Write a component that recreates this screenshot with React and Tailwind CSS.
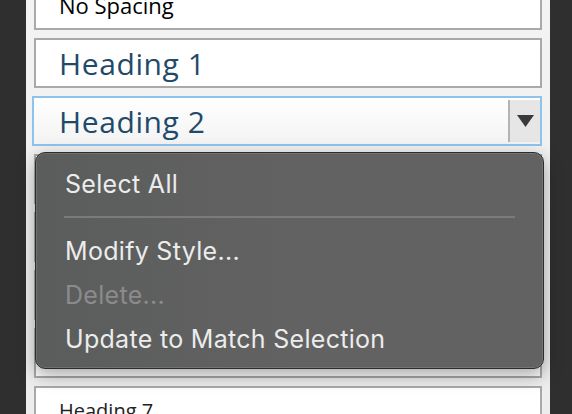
import React from "react";

// the boxes under the menu are covered; their labels are not drawn
const boxes = [
  { id: "nospacing", label: "No Spacing", kind: "plain" },
  { id: "h1", label: "Heading 1", kind: "heading" },
  { id: "h2", label: "Heading 2", kind: "active" },
  { id: "h3", label: "", kind: "heading" },
  { id: "h4", label: "", kind: "heading" },
  { id: "h5", label: "", kind: "heading" },
  { id: "h6", label: "", kind: "heading" },
  { id: "h7", label: "Heading 7", kind: "small" },
];

function StyleBox({ label, kind }) {
  if (kind === "active") {
    return (
      <div className="-ml-[2px] flex h-[50px] w-[510px] shrink-0 border-2 border-[#8fc3ea] bg-gradient-to-b from-white to-[#f3f3f3]">
        <div className="flex flex-1 items-center pl-[25px] text-[30px] tracking-[0.6px] text-[#1f4a69] [font-family:'Open_Sans',sans-serif]">
          {label}
        </div>
        <div className="my-[2px] flex w-[32px] items-center justify-center border-l-2 border-[#b4b4b4] bg-[#e6e6e6]">
          <svg width="17" height="14" viewBox="0 0 17 14">
            <path d="M0 1 L17 1 L8.5 13 Z" fill="#3a3a3a" />
          </svg>
        </div>
      </div>
    );
  }
  const text =
    kind === "plain"
      ? "text-[22px] text-black"
      : kind === "small"
      ? "text-[20px] text-[#222]"
      : "text-[30px] tracking-[0.6px] text-[#1f4a69]";
  return (
    <div
      className={`flex h-[50px] w-[508px] shrink-0 items-center border-2 border-[#a9a9a9] bg-white pl-[23px] [font-family:'Open_Sans',sans-serif] ${text}`}
    >
      {label}
    </div>
  );
}

function MenuItem({ children, disabled }) {
  return (
    <div
      className={`flex h-[44px] items-center pl-[29px] text-[25px] tracking-[0.3px] ${
        disabled ? "text-[#8b8b8b]" : "text-[#ececec]"
      }`}
    >
      {children}
    </div>
  );
}

export default function App() {
  return (
    <div className="flex h-[414px] w-[572px] overflow-hidden bg-[#2f2f2f]">
      <div className="relative ml-[26px] h-full w-[524px] bg-gradient-to-b from-[#f3f3f3] to-[#ededed]">
        <div className="-mt-[20px] flex flex-col gap-[8px] pl-[8px]">
          {boxes.map((b) => (
            <StyleBox key={b.id} label={b.label} kind={b.kind} />
          ))}
        </div>

        <div className="absolute left-[9px] top-[152px] h-[217px] w-[509px] rounded-[10px] border border-[#2c2c2c] bg-gradient-to-r from-[#5b5d5c] via-[#616261] to-[#626262] shadow-[0_6px_18px_rgba(0,0,0,0.35),inset_0_0_0_1px_rgba(255,255,255,0.12)] [font-family:Inter,sans-serif]">
          <div className="flex flex-col pt-[10px]">
            <MenuItem>Select All</MenuItem>
            <div className="mx-[28px] mb-[12px] mt-[9px] h-[2px] bg-[#7a7b7a]" />
            <MenuItem>Modify Style...</MenuItem>
            <MenuItem disabled>Delete...</MenuItem>
            <MenuItem>Update to Match Selection</MenuItem>
          </div>
        </div>
      </div>
    </div>
  );
}
